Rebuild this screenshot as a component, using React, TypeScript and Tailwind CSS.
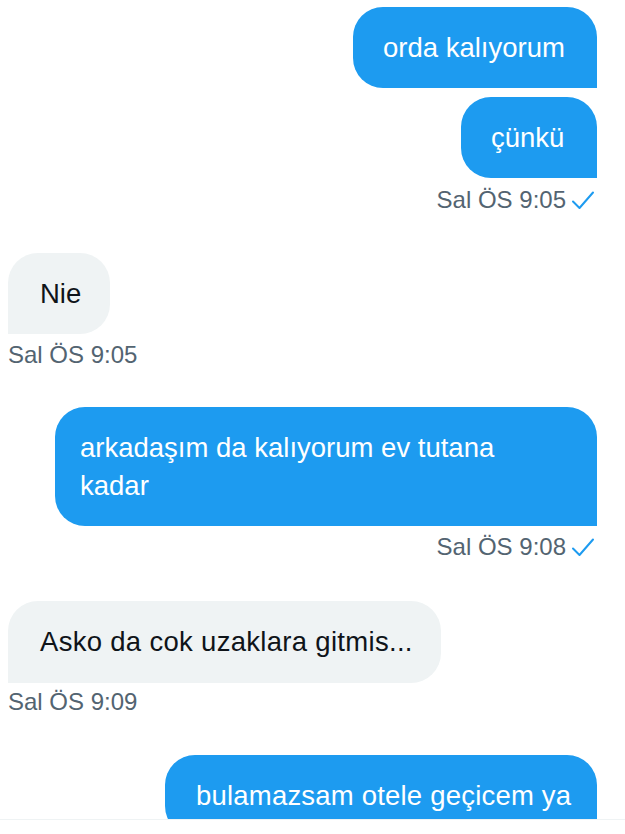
import React from "react";

const Check = () => (
  <svg width="24" height="20" viewBox="0 0 24 20" fill="none" className="ml-[5px]">
    <path d="M2 11.5 L8.5 18 L22 2.5" stroke="#1d9bf0" strokeWidth="2" strokeLinecap="round" strokeLinejoin="round" />
  </svg>
);

const SentTime = ({ t }: { t: string }) => (
  <div className="flex items-center justify-end h-[28px] text-[24px] leading-[28px] text-[#536471] mr-[2px]">
    <span>{t}</span>
    <Check />
  </div>
);

const RecvTime = ({ t }: { t: string }) => (
  <div className="flex items-center h-[28px] text-[24px] leading-[28px] text-[#536471]">
    <span>{t}</span>
  </div>
);

export default function App() {
  return (
    <div
      className="w-[625px] h-[834px] bg-white overflow-hidden relative"
      style={{ fontFamily: '"Liberation Sans", Arial, sans-serif' }}
    >
      <div className="flex flex-col pl-[8px] pr-[28px] pt-[7px] h-[819px] overflow-hidden">
        <div className="flex justify-end">
          <div className="bg-[#1d9bf0] text-white text-[27.5px] leading-[38px] pt-[22px] pb-[21px] px-[30px] rounded-t-[30px] rounded-bl-[30px] w-[244px] whitespace-nowrap">
            orda kalıyorum
          </div>
        </div>
        <div className="flex justify-end mt-[9px]">
          <div className="bg-[#1d9bf0] text-white text-[27.5px] leading-[38px] pt-[22px] pb-[21px] px-[30px] rounded-t-[30px] rounded-bl-[30px] w-[136px]">
            çünkü
          </div>
        </div>
        <div className="mt-[8px]">
          <SentTime t="Sal ÖS 9:05" />
        </div>

        <div className="flex mt-[39px]">
          <div className="bg-[#eff3f4] text-[#0f1419] text-[27.5px] leading-[38px] pt-[22px] pb-[21px] pl-[32px] pr-[28px] rounded-t-[30px] rounded-br-[30px] w-[102px]">
            Nie
          </div>
        </div>
        <div className="mt-[7px]">
          <RecvTime t="Sal ÖS 9:05" />
        </div>

        <div className="flex justify-end mt-[38px]">
          <div className="bg-[#1d9bf0] text-white text-[27.5px] leading-[38px] pt-[22px] pb-[21px] pl-[25px] pr-[30px] rounded-t-[30px] rounded-bl-[30px] w-[542px]">
            arkadaşım da kalıyorum ev tutana
            <br />
            kadar
          </div>
        </div>
        <div className="mt-[7px]">
          <SentTime t="Sal ÖS 9:08" />
        </div>

        <div className="flex mt-[40px]">
          <div className="bg-[#eff3f4] text-[#0f1419] text-[27.5px] leading-[38px] tracking-[0.3px] pt-[22px] pb-[22px] pl-[32px] pr-[20px] rounded-t-[30px] rounded-br-[30px] w-[433px] whitespace-nowrap">
            Asko da cok uzaklara gitmis...
          </div>
        </div>
        <div className="mt-[5px]">
          <RecvTime t="Sal ÖS 9:09" />
        </div>

        <div className="flex justify-end mt-[39px]">
          <div className="bg-[#1d9bf0] text-white text-[27.5px] leading-[38px] tracking-[0.2px] pt-[22px] pb-[21px] pl-[31px] pr-[20px] rounded-t-[30px] rounded-bl-[30px] w-[432px] whitespace-nowrap">
            bulamazsam otele geçicem ya
          </div>
        </div>
      </div>
      <div className="border-t border-[#eff3f4] bg-white h-[15px]" />
    </div>
  );
}
